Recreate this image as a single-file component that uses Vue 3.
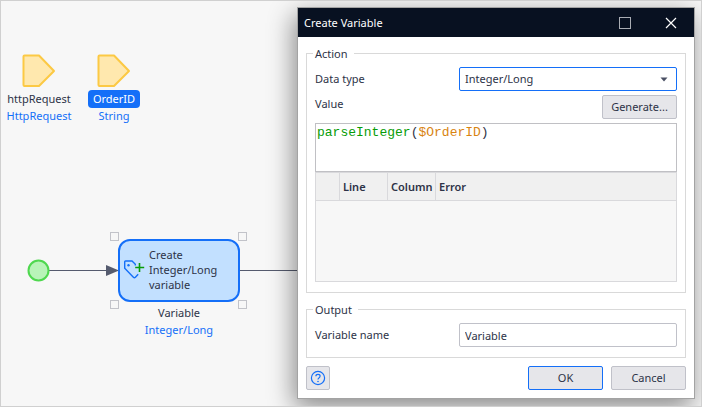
<script setup>
import { computed, ref } from 'vue'

const dataType = ref('Integer/Long')
const expression = ref('parseInteger($OrderID)')
const variableName = ref('Variable')

const tokens = computed(() =>
  (expression.value.match(/\$\w+|\w+|[^\w$]+|\$/g) || []).map((text) => ({
    text,
    kind: /^\$\w/.test(text) ? 'variable' : /^\w/.test(text) ? 'function' : 'plain',
  }))
)

const inputs = [
  { name: 'httpRequest', type: 'HttpRequest', selected: false, place: 'first' },
  { name: 'OrderID', type: 'String', selected: true, place: 'second' },
]
</script>

<template>
  <main class="canvas">
    <div v-for="item in inputs" :key="item.name" class="param" :class="item.place">
      <svg width="34" height="34" viewBox="0 0 34 34" aria-hidden="true">
        <path d="M1.5 2.5 Q1.5 1.5 2.5 1.5 H17 L32 17 L17 32 H2.5 Q1.5 32 1.5 31 Z" fill="#ffe8ae" stroke="#fcc944" stroke-width="2" stroke-linejoin="round" />
      </svg>
      <span class="param-name" :class="{ selected: item.selected }">{{ item.name }}</span>
      <span class="type">{{ item.type }}</span>
    </div>

    <svg class="flow" width="320" height="24" viewBox="0 0 320 24" aria-hidden="true">
      <path d="M21 12.5 H320" stroke="#555b6e" fill="none" />
      <path d="M79 7 L92 12.5 L79 18 Z" fill="#555b6e" />
      <circle cx="11.5" cy="12.5" r="10" fill="#b8f4b8" stroke="#4fd84f" stroke-width="2" />
    </svg>

    <div class="task">
      <div class="task-box">
        <svg width="24" height="22" viewBox="0 0 24 22" aria-hidden="true">
          <path d="M12.3 6.5 V5.2 L9 2 H2.5 Q1.7 2 1.7 2.8 V9.2 L10.4 18.2 Q11.4 19.2 12.4 18.2 L15.2 15.3" fill="none" stroke="#146ff8" stroke-width="1.4" />
          <circle cx="5.5" cy="6.3" r="1.2" fill="#146ff8" />
          <path d="M12.2 8.5 H21.2 M16.5 4 V13" stroke="#089c08" stroke-width="1.6" />
        </svg>
        <span>Create<br />Integer/Long<br />variable</span>
      </div>
      <i class="handle nw"></i><i class="handle ne"></i><i class="handle sw"></i><i class="handle se"></i>
      <span class="task-name">Variable</span>
      <span class="type">Integer/Long</span>
    </div>

    <section class="dialog" role="dialog" aria-labelledby="dialog-title">
      <header class="titlebar">
        <h1 id="dialog-title">Create Variable</h1>
        <button type="button" class="win-button" aria-label="Maximize">
          <svg width="12" height="12" viewBox="0 0 12 12"><rect x="0.5" y="0.5" width="11" height="11" fill="none" stroke="#a9adb4" /></svg>
        </button>
        <button type="button" class="win-button" aria-label="Close">
          <svg width="12" height="12" viewBox="0 0 12 12"><path d="M1 1 L11 11 M11 1 L1 11" stroke="#fff" stroke-width="1.2" /></svg>
        </button>
      </header>

      <form class="body" @submit.prevent>
        <fieldset>
          <legend>Action</legend>
          <div class="row">
            <label for="data-type">Data type</label>
            <span class="select-wrap">
              <select id="data-type" v-model="dataType">
                <option>Integer/Long</option>
              </select>
              <svg class="arrow" width="8" height="5" viewBox="0 0 8 5" aria-hidden="true"><path d="M0.5 0.5 H7.5 L4 4.5 Z" fill="#4a5064" /></svg>
            </span>
          </div>
          <div class="row value-row">
            <label for="value">Value</label>
            <button type="button" class="button">Generate...</button>
          </div>
          <div class="editor">
            <pre aria-hidden="true"><span v-for="(t, i) in tokens" :key="i" :class="t.kind">{{ t.text }}</span></pre>
            <textarea id="value" v-model="expression" spellcheck="false"></textarea>
          </div>
          <table>
            <thead>
              <tr>
                <th class="narrow"></th>
                <th class="medium">Line</th>
                <th class="medium">Column</th>
                <th>Error</th>
              </tr>
            </thead>
            <tbody>
              <tr><td colspan="4"></td></tr>
            </tbody>
          </table>
        </fieldset>

        <fieldset>
          <legend>Output</legend>
          <div class="row">
            <label for="variable-name">Variable name</label>
            <input id="variable-name" v-model="variableName" type="text" />
          </div>
        </fieldset>

        <footer>
          <button type="button" class="button help" aria-label="Help">
            <svg width="16" height="16" viewBox="0 0 16 16" fill="none" stroke="#146ff8">
              <circle cx="8" cy="8" r="6.6" stroke-width="1.2" />
              <path d="M5.9 6.3 Q5.9 4.3 8 4.3 Q10.1 4.3 10.1 6.1 Q10.1 7.2 8.9 7.9 Q8 8.5 8 9.6" stroke-width="1.2" />
              <circle cx="8" cy="11.5" r="0.8" fill="#146ff8" stroke="none" />
            </svg>
          </button>
          <button type="submit" class="button wide primary">OK</button>
          <button type="button" class="button wide">Cancel</button>
        </footer>
      </form>
    </section>
  </main>
</template>

<style>
body {
  margin: 0;
}
</style>

<style scoped>
* {
  box-sizing: border-box;
}

.canvas {
  position: relative;
  min-height: 100vh;
  overflow: hidden;
  border: 1px solid #d0d0d0;
  background: #f7f7f7;
  color: #2d3347;
  font: 11px/18px "Noto Sans", "Open Sans", sans-serif;
}

svg {
  display: block;
  flex: none;
}

button,
input,
select {
  margin: 0;
  color: inherit;
  font: inherit;
}

/* Diagram nodes */
.param {
  position: absolute;
  top: 53px;
  display: flex;
  flex-direction: column;
  align-items: center;
  width: 76px;
}

.first {
  left: 0;
}

.second {
  left: 75px;
}

.param-name {
  margin-top: 2px;
  padding: 0 5px 1px;
  border-radius: 4px;
  line-height: 17px;
}

.selected {
  background: #146ff8;
  color: #fff;
}

.type {
  line-height: 15px;
  color: #146ff8;
}

.flow {
  position: absolute;
  top: 257px;
  left: 26px;
}

.task {
  position: absolute;
  top: 238px;
  left: 117px;
  display: flex;
  flex-direction: column;
  align-items: center;
  width: 122px;
}

.task-box {
  display: flex;
  align-items: center;
  gap: 2px;
  width: 100%;
  height: 63px;
  padding: 0 0 2px 3px;
  border: 2px solid #146ff8;
  border-radius: 12px;
  background: #c2e0ff;
  line-height: 15px;
}

.task-name {
  margin-top: 2px;
}

.handle {
  position: absolute;
  width: 9px;
  height: 9px;
  border: 1px solid #c2c3c9;
}

.nw,
.ne {
  top: -7px;
}

.sw,
.se {
  top: 61px;
}

.nw,
.sw {
  left: -8px;
}

.ne,
.se {
  right: -7px;
}

/* Dialog window */
.dialog {
  position: absolute;
  top: 6px;
  right: 6px;
  left: 296px;
  border: 1px solid #a3a3a3;
  background: #fff;
  box-shadow: -3px 8px 24px rgba(0, 0, 0, 0.45);
}

.titlebar {
  display: flex;
  align-items: center;
  height: 29px;
  padding-left: 6px;
  background: #081121;
  color: #fff;
}

h1 {
  flex: 1;
  margin: 0;
  font: inherit;
}

.win-button {
  display: flex;
  align-items: center;
  justify-content: center;
  width: 46px;
  height: 29px;
  padding: 0;
  border: 0;
  background: none;
}

.body {
  display: flex;
  flex-direction: column;
  gap: 8px;
  padding: 8px;
}

fieldset {
  min-width: 0;
  margin: 0;
  padding: 5px 8px 10px;
  border: 1px solid #d9d9d9;
}

legend {
  margin-left: -2px;
  padding: 0 6px 0 2px;
  line-height: 17px;
}

.row {
  display: grid;
  grid-template-columns: 144px 1fr;
  align-items: center;
}

.value-row {
  grid-template-columns: 1fr auto;
  align-items: start;
  margin: 4px 0;
}

.select-wrap {
  display: grid;
  align-items: center;
}

.select-wrap > * {
  grid-area: 1 / 1;
}

.arrow {
  justify-self: end;
  margin-right: 9px;
  pointer-events: none;
}

select,
input {
  width: 100%;
  height: 24px;
  padding: 0 5px;
  border: 1px solid #c0c1c9;
  border-radius: 2px;
  outline: 0;
  background: #fff;
}

select {
  appearance: none;
  border-color: #146ff8;
}

.button {
  display: flex;
  align-items: center;
  justify-content: center;
  min-width: 75px;
  height: 24px;
  padding: 0 4px;
  border: 1px solid #c0c1c9;
  border-radius: 2px;
  background: #e6e6ea;
}

.editor {
  display: grid;
  height: 49px;
  border: 1px solid #c0c0c4;
}

.editor > * {
  grid-area: 1 / 1;
  margin: 0;
  padding: 0 1px;
  border: 0;
  font: 13px/17px "Liberation Mono", monospace;
  white-space: pre-wrap;
}

.editor textarea {
  outline: 0;
  background: transparent;
  color: transparent;
  caret-color: #2d3347;
  resize: none;
}

.function {
  color: #089c08;
}

.variable {
  color: #d98411;
}

table {
  width: 100%;
  height: 110px;
  border: 1px solid #d9d9dc;
  border-spacing: 0;
  table-layout: fixed;
  background: #f7f7f7;
}

th {
  height: 28px;
  padding: 0 0 0 3px;
  border-right: 1px solid #d9d9dc;
  border-bottom: 1px solid #d9d9dc;
  background: #f0f0f0;
  font-weight: 600;
  text-align: left;
}

th:last-child {
  border-right: 0;
}

.narrow {
  width: 24px;
}

.medium {
  width: 48px;
}

td {
  padding: 0;
}

footer {
  display: flex;
  gap: 8px;
}

.help {
  min-width: 24px;
  margin-right: auto;
  padding: 0 3px;
}

.primary {
  border-color: #146ff8;
}
</style>
